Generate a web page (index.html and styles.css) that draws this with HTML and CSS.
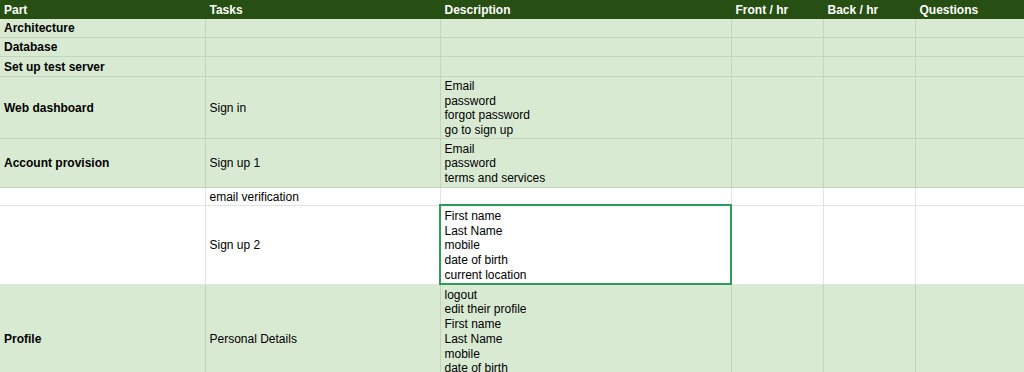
FILE: index.html
```html
<!DOCTYPE html>
<html>
<head>
    <title>Plano de tarefas</title>
    <meta charset="UTF-8">
    <link rel="stylesheet" href="styles.css">
</head>
<body>
    <table class="sheet">
        <colgroup>
            <col class="col-part">
            <col class="col-tasks">
            <col class="col-desc">
            <col class="col-front">
            <col class="col-back">
            <col class="col-questions">
        </colgroup>
        <thead>
            <tr class="head">
                <th>Part</th>
                <th>Tasks</th>
                <th>Description</th>
                <th>Front / hr</th>
                <th>Back / hr</th>
                <th>Questions</th>
            </tr>
        </thead>
        <tbody>
            <tr class="green h19">
                <td class="part">Architecture</td>
                <td></td><td></td><td></td><td></td><td></td>
            </tr>
            <tr class="green h19">
                <td class="part">Database</td>
                <td></td><td></td><td></td><td></td><td></td>
            </tr>
            <tr class="green h20">
                <td class="part">Set up test server</td>
                <td></td><td></td><td></td><td></td><td></td>
            </tr>
            <tr class="green h62">
                <td class="part">Web dashboard</td>
                <td>Sign in</td>
                <td>Email<br>password<br>forgot password<br>go to sign up</td>
                <td></td><td></td><td></td>
            </tr>
            <tr class="green h49">
                <td class="part">Account provision</td>
                <td>Sign up 1</td>
                <td>Email<br>password<br>terms and services</td>
                <td></td><td></td><td></td>
            </tr>
            <tr class="white h18">
                <td></td>
                <td>email verification</td>
                <td></td><td></td><td></td><td></td>
            </tr>
            <tr class="white h79">
                <td></td>
                <td>Sign up 2</td>
                <td class="selected">First name<br>Last Name<br>mobile<br>date of birth<br>current location</td>
                <td></td><td></td><td></td>
            </tr>
            <tr class="green h108">
                <td class="part">Profile</td>
                <td>Personal Details</td>
                <td>logout<br>edit their profile<br>First name<br>Last Name<br>mobile<br>date of birth<br>current location</td>
                <td></td><td></td><td></td>
            </tr>
        </tbody>
    </table>
</body>
</html>
```

FILE: styles.css
```css
body {
    margin: 0;
    font-family: "Liberation Sans", Arial, sans-serif;
    font-size: 12px;
    color: #000;
    background-color: white;
    overflow: hidden;
}
.sheet {
    width: 1024px;
    border-collapse: collapse;
    table-layout: fixed;
}
.col-part { width: 205px; }
.col-tasks { width: 235px; }
.col-desc { width: 291px; }
.col-front { width: 92px; }
.col-back { width: 92px; }
.col-questions { width: 109px; }

th, td {
    padding: 2px 3px 0 4px;
    text-align: left;
    vertical-align: middle;
    line-height: 14.7px;
    white-space: nowrap;
    overflow: hidden;
}
.head {
    height: 18px;
    background-color: #274e13;
}
.head th {
    padding-top: 3px;
    color: white;
    font-weight: bold;
    border-right: 1px solid #274e13;
    border-bottom: 1px solid #274e13;
}
.green td {
    background-color: #d9ead3;
    border-right: 1px solid #c4d3be;
    border-bottom: 1px solid #c4d3be;
}
.white td {
    background-color: white;
    border-right: 1px solid #e2e2e2;
    border-bottom: 1px solid #e2e2e2;
}
.part {
    font-weight: bold;
}
.selected {
    outline: 2px solid #2e9a5c;
    outline-offset: -1px;
}
.h18 { height: 18px; }
.h19 { height: 19px; }
.h20 { height: 20px; }
.h49 { height: 49px; }
.h62 { height: 62px; }
.h79 { height: 79px; }
.h108 { height: 108px; }
```
